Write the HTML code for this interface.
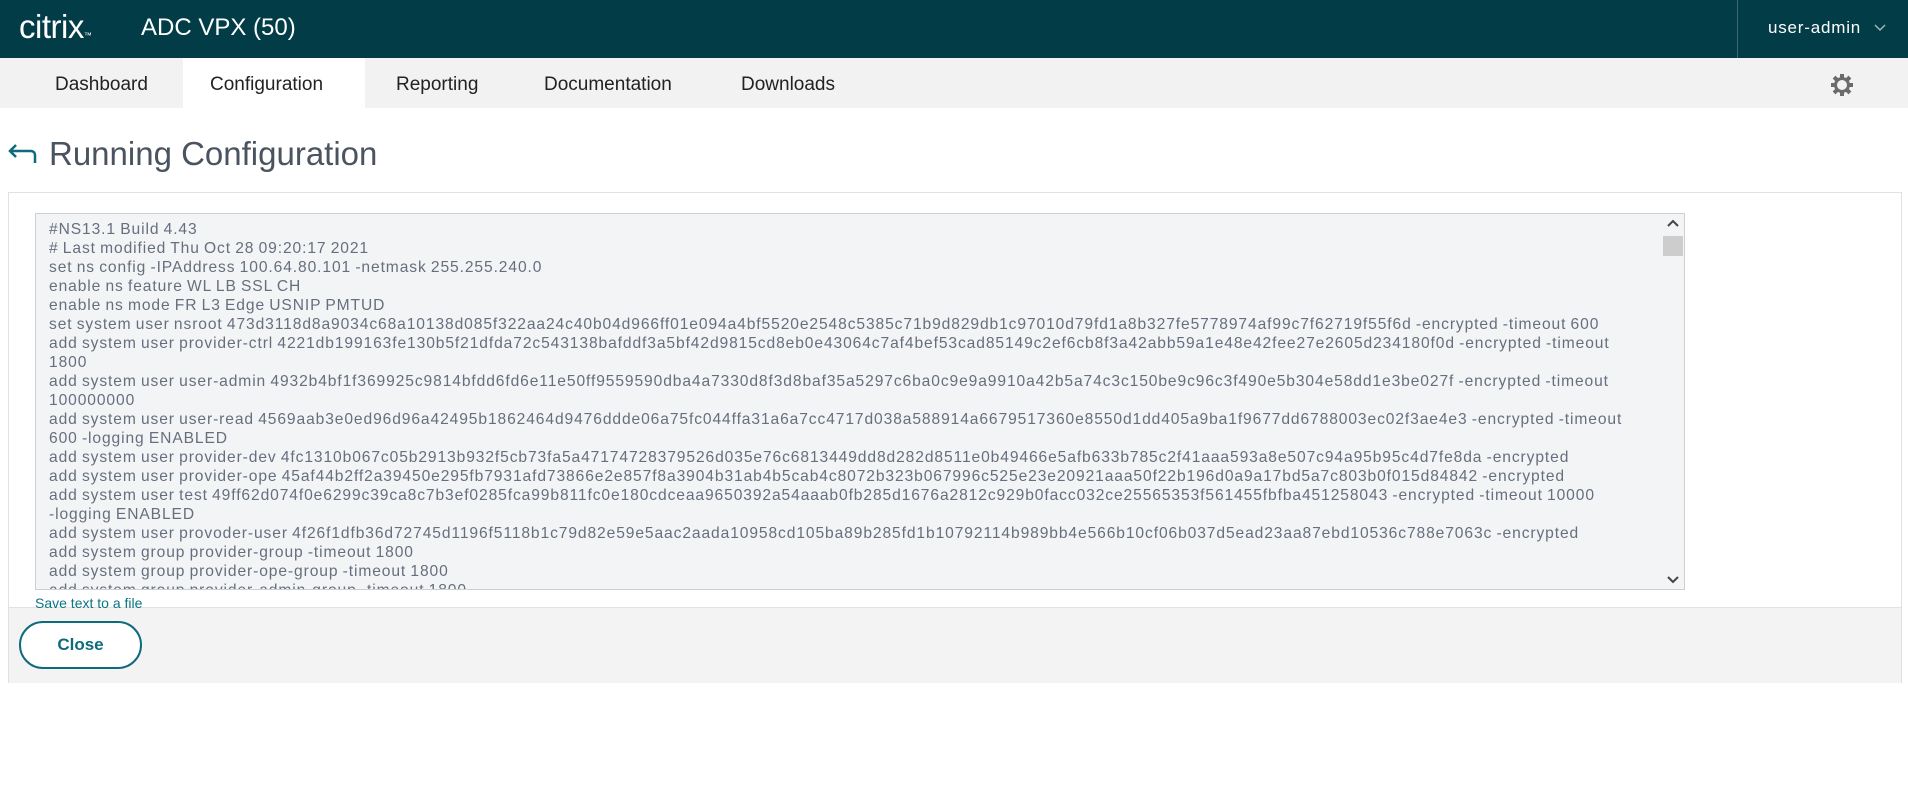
<!DOCTYPE html>
<html><head><meta charset="utf-8"><style>
*{margin:0;padding:0;box-sizing:border-box}
body{width:1908px;height:810px;overflow:hidden;background:#fff;font-family:"Liberation Sans",sans-serif;position:relative}
.hdr{position:absolute;left:0;top:0;width:1908px;height:58px;background:#023c47;color:#fff}
.logo{position:absolute;left:19px;top:8px;font-size:33px;letter-spacing:-0.5px;font-weight:300}
.prod{position:absolute;left:141px;top:14px;font-size:24px}
.div{position:absolute;left:1737px;top:0;width:1px;height:58px;background:#3d6870}
.usr{position:absolute;left:1768px;top:18px;font-size:17px;letter-spacing:0.8px}
.nav{position:absolute;left:0;top:58px;width:1908px;height:50px;background:#f2f2f2}
.tab{position:absolute;top:2px;height:50px;line-height:50px;font-size:19px;color:#222}
.act{background:#fff;top:0;line-height:54px}
.title{position:absolute;left:49px;top:135px;font-size:33px;color:#4a5360}
.panel{position:absolute;left:8px;top:192px;width:1894px;height:491px;border:1px solid #dfe2e5;background:#fff}
.foot{position:absolute;left:0;top:414px;width:1892px;height:76px;background:#f3f3f3;border-top:1px solid #e2e2e2}
.ta{position:absolute;left:26px;top:20px;width:1650px;height:377px;background:#f3f4f6;border:1px solid #ccd0d4;overflow:hidden}
.txt{position:absolute;left:13px;top:6px;font-size:15.6px;line-height:19px;color:#666f7e;white-space:nowrap;letter-spacing:0.9px;word-spacing:-1px}
.sb{position:absolute;right:0;top:0;width:22px;height:375px;background:#f3f4f6}
.thumb{position:absolute;right:1px;top:22px;width:20px;height:20px;background:#cdcdcd}
.save{position:absolute;left:26px;top:402px;font-size:14px;color:#0a7485}
.btn{position:absolute;left:10px;top:428px;width:123px;height:48px;border:2px solid #0d6b7b;border-radius:24px;background:#fff;color:#0d6b7b;font-size:17px;font-weight:bold;text-align:center;line-height:44px}
</style></head><body>
<div class="hdr">
<div class="logo">citrix<span style="font-size:8px">™</span></div>
<div class="prod">ADC VPX (50)</div>
<div class="div"></div>
<div class="usr">user-admin <svg width="14" height="10" viewBox="0 0 14 10" style="margin-left:6px"><path d="M2 2l5 5 5-5" fill="none" stroke="#9fb5b9" stroke-width="1.5"/></svg></div>
</div>
<div class="nav">
<div class="tab" style="left:55px">Dashboard</div>
<div class="tab act" style="left:183px;width:182px;padding-left:27px">Configuration</div>
<div class="tab" style="left:396px">Reporting</div>
<div class="tab" style="left:544px">Documentation</div>
<div class="tab" style="left:741px">Downloads</div>
<svg style="position:absolute;left:1830px;top:15px" width="24" height="24" viewBox="0 0 24 24"><g fill="#6b6b6b"><circle cx="12" cy="12" r="8"/><rect x="10" y="1" width="4" height="4"/><rect x="10" y="19" width="4" height="4"/><rect x="1" y="10" width="4" height="4"/><rect x="19" y="10" width="4" height="4"/><rect x="3.5" y="3.5" width="4" height="4" transform="rotate(45 5.5 5.5)"/><rect x="16.5" y="3.5" width="4" height="4" transform="rotate(45 18.5 5.5)"/><rect x="3.5" y="16.5" width="4" height="4" transform="rotate(45 5.5 18.5)"/><rect x="16.5" y="16.5" width="4" height="4" transform="rotate(45 18.5 18.5)"/></g><circle cx="12" cy="12" r="5" fill="#f2f2f2"/></svg>
</div>
<svg style="position:absolute;left:7px;top:143px" width="30" height="22" viewBox="0 0 30 22"><path d="M28 20V12a4 4 0 0 0-4-4H3M9 2L3 8l6 6" fill="none" stroke="#0d6b7b" stroke-width="2.5"/></svg>
<div class="title">Running Configuration</div>
<div class="panel">
<div class="ta"><div class="txt">#NS13.1 Build 4.43<br># Last modified Thu Oct 28 09:20:17 2021<br>set ns config -IPAddress 100.64.80.101 -netmask 255.255.240.0<br>enable ns feature WL LB SSL CH<br>enable ns mode FR L3 Edge USNIP PMTUD<br>set system user nsroot 473d3118d8a9034c68a10138d085f322aa24c40b04d966ff01e094a4bf5520e2548c5385c71b9d829db1c97010d79fd1a8b327fe5778974af99c7f62719f55f6d -encrypted -timeout 600<br>add system user provider-ctrl 4221db199163fe130b5f21dfda72c543138bafddf3a5bf42d9815cd8eb0e43064c7af4bef53cad85149c2ef6cb8f3a42abb59a1e48e42fee27e2605d234180f0d -encrypted -timeout<br>1800<br>add system user user-admin 4932b4bf1f369925c9814bfdd6fd6e11e50ff9559590dba4a7330d8f3d8baf35a5297c6ba0c9e9a9910a42b5a74c3c150be9c96c3f490e5b304e58dd1e3be027f -encrypted -timeout<br>100000000<br>add system user user-read 4569aab3e0ed96d96a42495b1862464d9476ddde06a75fc044ffa31a6a7cc4717d038a588914a6679517360e8550d1dd405a9ba1f9677dd6788003ec02f3ae4e3 -encrypted -timeout<br>600 -logging ENABLED<br>add system user provider-dev 4fc1310b067c05b2913b932f5cb73fa5a47174728379526d035e76c6813449dd8d282d8511e0b49466e5afb633b785c2f41aaa593a8e507c94a95b95c4d7fe8da -encrypted<br>add system user provider-ope 45af44b2ff2a39450e295fb7931afd73866e2e857f8a3904b31ab4b5cab4c8072b323b067996c525e23e20921aaa50f22b196d0a9a17bd5a7c803b0f015d84842 -encrypted<br>add system user test 49ff62d074f0e6299c39ca8c7b3ef0285fca99b811fc0e180cdceaa9650392a54aaab0fb285d1676a2812c929b0facc032ce25565353f561455fbfba451258043 -encrypted -timeout 10000<br>-logging ENABLED<br>add system user provoder-user 4f26f1dfb36d72745d1196f5118b1c79d82e59e5aac2aada10958cd105ba89b285fd1b10792114b989bb4e566b10cf06b037d5ead23aa87ebd10536c788e7063c -encrypted<br>add system group provider-group -timeout 1800<br>add system group provider-ope-group -timeout 1800<br>add system group provider-admin-group -timeout 1800</div>
<div class="sb"><svg style="position:absolute;left:5px;top:5px" width="12" height="8" viewBox="0 0 12 8"><path d="M1 7l5-5 5 5" fill="none" stroke="#444" stroke-width="2"/></svg><div class="thumb"></div><svg style="position:absolute;left:5px;top:362px" width="12" height="8" viewBox="0 0 12 8"><path d="M1 1l5 5 5-5" fill="none" stroke="#444" stroke-width="2"/></svg></div>
</div>
<div class="foot"></div>
<div class="save">Save text to a file</div>
<div class="btn">Close</div>
</div>
</body></html>
